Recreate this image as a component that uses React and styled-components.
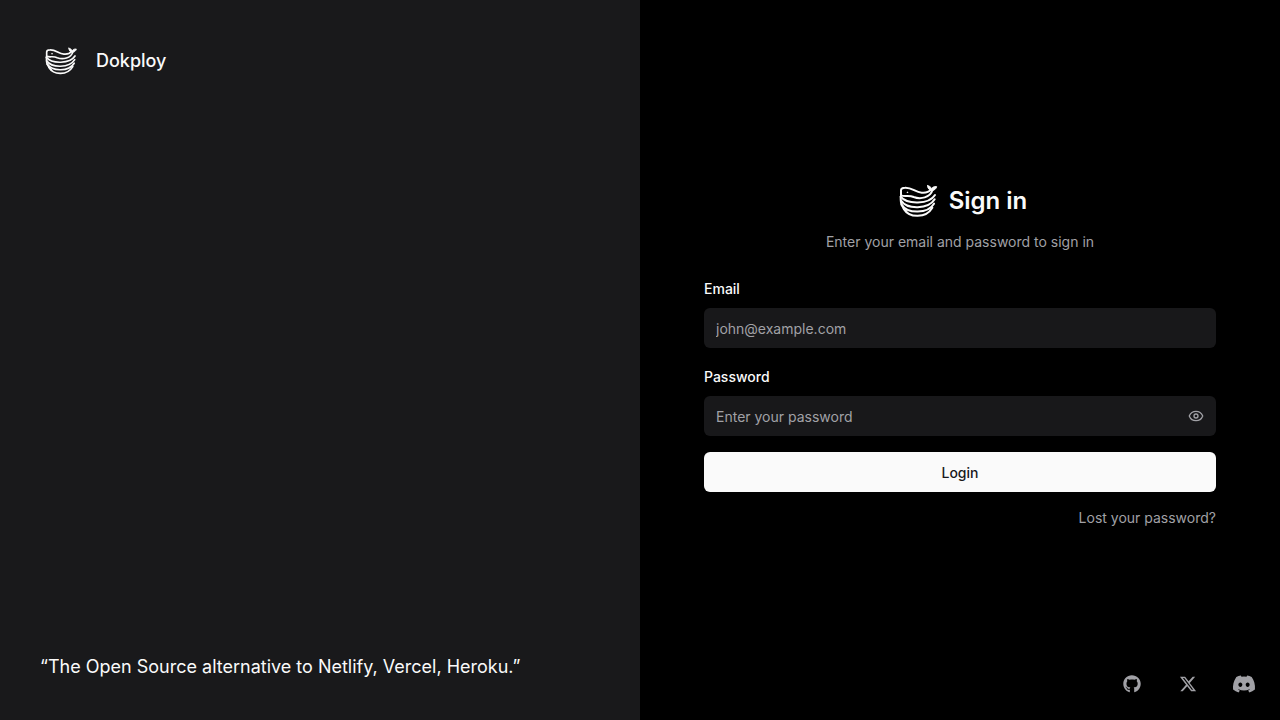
import React, { useState } from 'react'
import styled, { createGlobalStyle } from 'styled-components'
import { Eye, EyeOff } from 'lucide-react'
import { FaDiscord, FaGithub, FaXTwitter } from 'react-icons/fa6'

const colors = {
  background: '#000000',
  panel: '#19191b',
  input: '#18181a',
  text: '#fafafa',
  muted: '#a1a1a6',
}

const socials = [
  { name: 'GitHub', href: 'https://github.com/Dokploy/dokploy', icon: FaGithub, size: 18 },
  { name: 'X', href: 'https://x.com/getdokploy', icon: FaXTwitter, size: 18 },
  { name: 'Discord', href: 'https://discord.gg/2tBnJ3jDJc', icon: FaDiscord, size: 24 },
]

const Logo = ({ size }) => (
  <LogoSvg viewBox="0 0 144 144" $size={size} aria-hidden="true">
    <path d="M24 58V40C24 34 28 32 36 32C58 31 66 46 86 47C99 48 108 45 113 38" />
    <path d="M24 55C36 60 47 53 62 60C82 68 112 62 118 40" />
    <path
      d="M104 26C103 34 109 39 115 41C122 41 129 37 131 29C123 28 118 31 116 35C113 29 109 27 104 26Z"
      fill="currentColor"
      strokeWidth="3"
    />
    <path d="M23 59C42 83 108 83 126 54" />
    <path d="M24 71C42 98 106 98 125 67" />
    <path d="M26 83C44 111 104 111 123 80" />
    <path d="M23 59C23 71 24 79 26 84C31 94 36 100 40 103" />
    <path d="M32 95C49 124 99 124 118 92" />
    <circle cx="43" cy="46" r="1" strokeWidth="3" />
  </LogoSvg>
)

const PasswordField = () => {
  const [visible, setVisible] = useState(false)
  const Icon = visible ? EyeOff : Eye

  return (
    <Field>
      <Label htmlFor="password">Password</Label>
      <InputWrap>
        <Input
          id="password"
          type={visible ? 'text' : 'password'}
          placeholder="Enter your password"
          $hasButton
        />
        <ToggleButton
          type="button"
          aria-label={visible ? 'Hide password' : 'Show password'}
          onClick={() => setVisible(!visible)}
        >
          <Icon size={16} />
        </ToggleButton>
      </InputWrap>
    </Field>
  )
}

const App = () => (
  <Page>
    <GlobalStyle />
    <Aside>
      <Brand href="/">
        <Logo size={40} />
        Dokploy
      </Brand>
      <Quote>“The Open Source alternative to Netlify, Vercel, Heroku.”</Quote>
    </Aside>
    <Main>
      <Content>
        <Title>
          <Logo size={48} />
          Sign in
        </Title>
        <Description>Enter your email and password to sign in</Description>
        <Form onSubmit={(event) => event.preventDefault()}>
          <Field>
            <Label htmlFor="email">Email</Label>
            <Input id="email" type="email" placeholder="john@example.com" />
          </Field>
          <PasswordField />
          <LoginButton type="submit">Login</LoginButton>
        </Form>
        <LostLink href="/send-reset-password">Lost your password?</LostLink>
      </Content>
      <Socials>
        {socials.map(({ name, href, icon: Icon, size }) => (
          <SocialLink key={name} href={href} aria-label={name}>
            <Icon size={size} />
          </SocialLink>
        ))}
      </Socials>
    </Main>
  </Page>
)

const GlobalStyle = createGlobalStyle`
  *, *::before, *::after {
    box-sizing: border-box;
  }

  body {
    margin: 0;
    background: ${colors.background};
    color: ${colors.text};
    font-family: Inter, "Liberation Sans", sans-serif;
    font-size: 14px;
    line-height: 20px;
  }

  a {
    color: inherit;
    text-decoration: none;
  }
`

const Page = styled.div`
  display: grid;
  grid-template-columns: 1fr 1fr;
  min-height: 100vh;
`

const Aside = styled.aside`
  display: flex;
  flex-direction: column;
  justify-content: space-between;
  padding: 41px 40px 39px;
  background: ${colors.panel};
`

const Brand = styled.a`
  display: flex;
  align-items: center;
  gap: 16px;
  font-size: 18px;
  font-weight: 500;
  line-height: 28px;
`

const LogoSvg = styled.svg`
  flex-shrink: 0;
  width: ${props => props.$size}px;
  height: ${props => props.$size}px;
  fill: none;
  stroke: currentColor;
  stroke-width: 6;
  stroke-linecap: round;
  stroke-linejoin: round;
`

const Quote = styled.p`
  margin: 0;
  font-size: 18px;
  line-height: 28px;
`

const Main = styled.main`
  position: relative;
  display: flex;
  align-items: center;
  justify-content: center;
`

const Content = styled.div`
  display: flex;
  flex-direction: column;
  width: 100%;
  max-width: 512px;
  padding-bottom: 15px;
`

const Title = styled.h1`
  display: flex;
  align-items: center;
  justify-content: center;
  gap: 8px;
  margin: 0 0 7px;
  font-size: 24px;
  font-weight: 600;
  line-height: 32px;
`

const Description = styled.p`
  margin: 0 0 30px;
  color: ${colors.muted};
  text-align: center;
`

const Form = styled.form`
  display: flex;
  flex-direction: column;
  gap: 16px;
`

const Field = styled.div`
  display: flex;
  flex-direction: column;
  gap: 12px;

  & + & {
    margin-top: 6px;
  }
`

const Label = styled.label`
  font-weight: 500;
  line-height: 14px;
`

const InputWrap = styled.div`
  position: relative;
`

const Input = styled.input`
  display: block;
  width: 100%;
  height: 40px;
  padding: 0 ${props => (props.$hasButton ? 40 : 12)}px 0 12px;
  border: 0;
  border-radius: 6px;
  background: ${colors.input};
  color: ${colors.text};
  font: inherit;

  &::placeholder {
    color: ${colors.muted};
    opacity: 1;
  }
`

const ToggleButton = styled.button`
  position: absolute;
  top: 0;
  right: 0;
  display: flex;
  align-items: center;
  height: 100%;
  padding: 0 12px;
  border: 0;
  background: none;
  color: ${colors.muted};
  cursor: pointer;
`

const LoginButton = styled.button`
  height: 40px;
  padding: 2px 16px 0;
  border: 0;
  border-radius: 6px;
  background: ${colors.text};
  color: #18181b;
  font: inherit;
  font-weight: 500;
  cursor: pointer;
`

const LostLink = styled.a`
  align-self: flex-end;
  margin-top: 16px;
  color: ${colors.muted};
`

const Socials = styled.nav`
  position: absolute;
  right: 16px;
  bottom: 16px;
  display: flex;
  gap: 16px;
`

const SocialLink = styled.a`
  display: flex;
  align-items: center;
  justify-content: center;
  width: 40px;
  height: 40px;
  color: ${colors.muted};
`

export default App
